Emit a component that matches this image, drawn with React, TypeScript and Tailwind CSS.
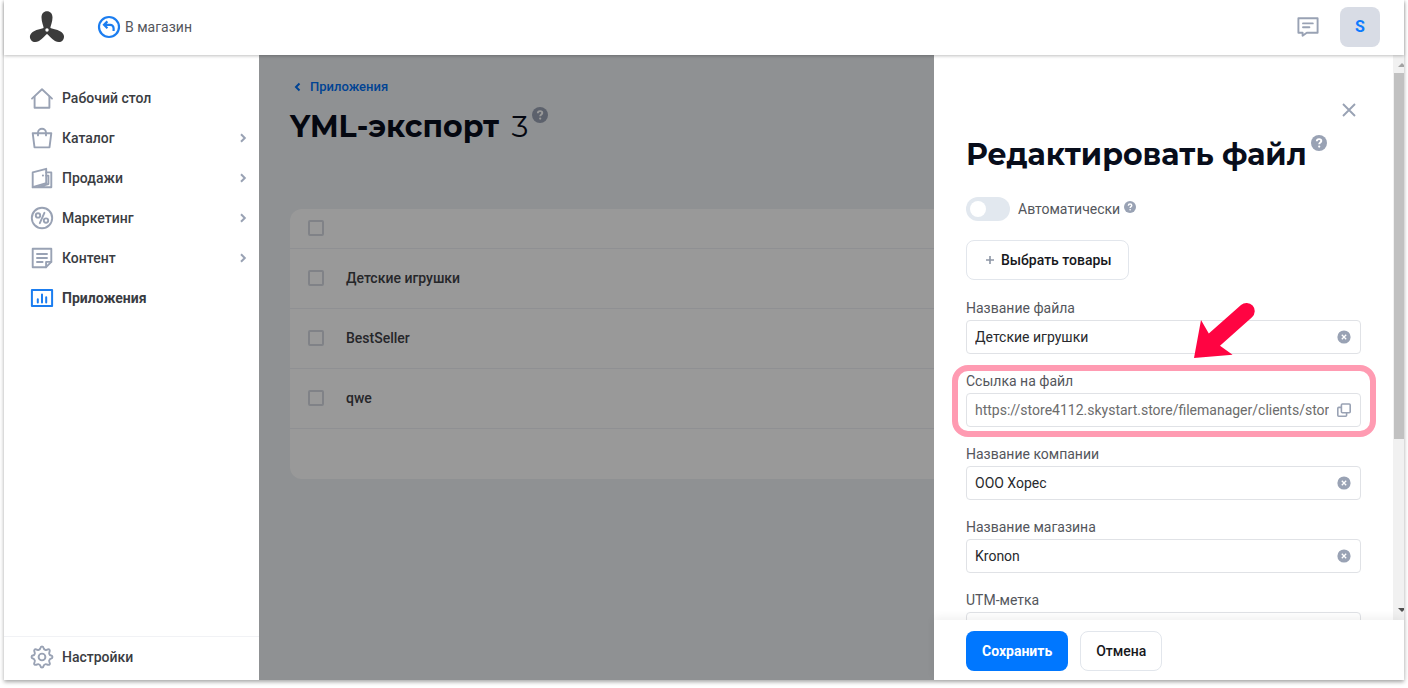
import React from 'react';

interface NavItem {
  label: string;
  icon: React.ReactNode;
  expandable?: boolean;
  active?: boolean;
}

interface FileField {
  id: string;
  label: string;
  value: string;
  copyable?: boolean;
}

const Icon: React.FC<{ children: React.ReactNode; className?: string }> = ({ children, className = '' }) => (
  <svg viewBox="0 0 24 24" className={`w-6 h-6 shrink-0 ${className}`} fill="none" stroke="currentColor" strokeWidth="1.9" strokeLinejoin="round" strokeLinecap="round" aria-hidden="true">
    {children}
  </svg>
);

const HomeIcon = () => (
  <Icon>
    <path d="M2 12.6 12 3.2l10 9.4" />
    <path d="M4.6 10.6v11.2h14.8V10.6" />
  </Icon>
);

const BagIcon = () => (
  <Icon>
    <path d="M2.7 7.2h18.6l-1.8 14.2H4.5z" />
    <path d="M8 9.4V6.8a4 4 0 0 1 8 0v2.6" />
  </Icon>
);

const WalletIcon = () => (
  <Icon>
    <path d="M2.7 6.4 16.2 2.8v14.4L2.7 21.2z" />
    <path d="M16.2 6.4h5.1v14.8H2.7M16.2 9.6h2.2v8.4L8 21" />
    <path d="M12.9 9.6h.1" strokeWidth="2" />
  </Icon>
);

const PercentIcon = () => (
  <Icon>
    <circle cx="12" cy="12" r="10.2" />
    <circle cx="8" cy="9.4" r="2.2" />
    <circle cx="16" cy="14.6" r="2.2" />
    <path d="M14.4 6.8 9.8 17.2" />
  </Icon>
);

const NoteIcon = () => (
  <Icon>
    <path d="M2.7 2.7h18.6v13.2l-5.2 5.3H2.7z" />
    <path d="M21.3 15.9h-5.2v5.3" />
    <path d="M7 8h10M7 12h10M7 16h5.6" />
  </Icon>
);

const ChartIcon = () => (
  <Icon className="text-[#1b7df0]">
    <path d="M1.9 4h20.2v16H1.9z" strokeWidth="2" />
    <path d="M7.8 13.2v3.2M12 8.6v7.8M16.2 11.2v5.2" strokeWidth="2" />
  </Icon>
);

const GearIcon = () => (
  <Icon>
    <path d="M10.2 3.6Q10.6 1.5 12 1.5t1.8 2.1q.3.7 1 1l.4.2q.7.3 1.4 0 2.1-1 2.9-.2t-.2 2.9q-.3.7 0 1.4l.2.4q.3.7 1 1 2 .4 2 1.7t-2 1.8q-.7.3-1 1l-.2.4q-.3.7 0 1.4 1 2.1.2 2.9t-2.9-.2q-.7-.3-1.4 0l-.4.2q-.7.3-1 1-.4 2-1.8 2t-1.8-2q-.3-.7-1-1l-.4-.2q-.7-.3-1.4 0-2.1 1-2.9.2t.2-2.9q.3-.7 0-1.4l-.2-.4q-.3-.7-1-1-2-.4-2-1.8t2-1.7q.7-.3 1-1l.2-.4q.3-.7 0-1.4-1-2.1-.2-2.9t2.9.2q.7.3 1.4 0l.4-.2q.7-.3 1-1z" />
    <circle cx="12" cy="12" r="3.4" />
  </Icon>
);

const HelpIcon: React.FC<{ className?: string }> = ({ className = '' }) => (
  <svg viewBox="0 0 16 16" className={`shrink-0 ${className}`} aria-hidden="true">
    <circle cx="8" cy="8" r="8" fill="#99a2b4" />
    <path d="M5.8 6.3c0-1.4 1-2.2 2.3-2.2s2.2.8 2.2 1.9c0 1.5-2.1 1.6-2.1 3.2" fill="none" stroke="#fff" strokeWidth="1.9" />
    <circle cx="8.2" cy="11.6" r="1.1" fill="#fff" />
  </svg>
);

const ClearIcon = () => (
  <svg viewBox="0 0 14 14" className="w-[14px] h-[14px]" aria-hidden="true">
    <circle cx="7" cy="7" r="6.6" fill="#99a2b4" />
    <path d="m4.8 4.8 4.4 4.4m0-4.4L4.8 9.2" stroke="#fff" strokeWidth="1.3" />
  </svg>
);

const CopyIcon = () => (
  <svg viewBox="0 0 14 14" className="w-[14px] h-[14px]" fill="none" stroke="#99a2b4" strokeWidth="1.6" strokeLinejoin="round" aria-hidden="true">
    <rect x="4.4" y="1" width="8.8" height="8.8" rx="1" />
    <path d="M4.4 4.4H1.8a1 1 0 0 0-1 1v6.8a1 1 0 0 0 1 1h6.8a1 1 0 0 0 1-1V9.9" />
  </svg>
);

const Logo = () => (
  <svg viewBox="0 0 36 36" className="w-9 h-9" aria-hidden="true">
    {[0, 120, 240].map(angle => (
      <path key={angle} transform={`rotate(${angle} 18 21)`} fill="#3b3b3b" d="M18 23c-2.2 0-3-1.4-3.2-3-.3-3.4-2.3-6.8-2.3-11.4 0-4 2.2-6.4 5.5-6.4s5.5 2.4 5.5 6.4c0 4.6-2 8-2.3 11.4-.2 1.6-1 3-3.2 3z" />
    ))}
    <circle cx="18" cy="21" r="1.7" fill="#fff" />
  </svg>
);

const navItems: NavItem[] = [
  { label: 'Рабочий стол', icon: <HomeIcon /> },
  { label: 'Каталог', icon: <BagIcon />, expandable: true },
  { label: 'Продажи', icon: <WalletIcon />, expandable: true },
  { label: 'Маркетинг', icon: <PercentIcon />, expandable: true },
  { label: 'Контент', icon: <NoteIcon />, expandable: true },
  { label: 'Приложения', icon: <ChartIcon />, active: true },
];

const files = ['Детские игрушки', 'BestSeller', 'qwe'];

const fields: FileField[] = [
  { id: 'file-name', label: 'Название файла', value: 'Детские игрушки' },
  { id: 'file-link', label: 'Ссылка на файл', value: 'https://store4112.skystart.store/filemanager/clients/store4112/export.yml', copyable: true },
  { id: 'company', label: 'Название компании', value: 'ООО Хорес' },
  { id: 'shop', label: 'Название магазина', value: 'Kronon' },
  { id: 'utm', label: 'UTM-метка', value: '' },
];

const checkboxClass = 'block appearance-none w-4 h-4 border-2 border-[#d5d9e2] rounded-xs bg-white';
const titleClass = 'font-[Montserrat,Inter,sans-serif] text-[30px] leading-[44px] font-bold text-[#080d1b] whitespace-nowrap';

const Header = () => (
  <header className="relative z-10 h-[55px] shrink-0 flex items-center bg-white pl-[25px] pr-6 pb-[2px] shadow-[0_1px_3px_rgba(0,0,0,0.25)]">
    <a href="#" aria-label="Главная"><Logo /></a>
    <a href="#" className="ml-8 flex items-center gap-1 text-sm text-[#54565c]">
      <svg viewBox="0 0 24 24" className="w-6 h-6" fill="none" stroke="#1b7df0" strokeWidth="2.2" aria-hidden="true">
        <circle cx="12" cy="12" r="10" />
        <path d="M10.4 6.4 7 9.8l3.4 3.4M7.4 9.8h5.8a3.4 3.4 0 0 1 3.4 3.4V16" />
      </svg>
      В магазин
    </a>
    <button className="ml-auto text-[#99a2b4]" aria-label="Сообщения">
      <Icon>
        <path d="M2.4 3.2h19.2v14.6H10.8l-4.2 3v-3H2.4z" />
        <path d="M7 8.4h9.8M7 12.2h6.4" />
      </Icon>
    </button>
    <button className="ml-5 w-10 h-10 rounded-lg bg-[#d8dce5] text-[#0d7aff] font-bold text-base">S</button>
  </header>
);

const Sidebar = () => (
  <nav className="w-[255px] shrink-0 flex flex-col bg-white text-sm font-medium text-[#3a3c42]">
    <ul className="pt-[23px]">
      {navItems.map(item => (
        <li key={item.label}>
          <a href="#" className={`h-10 flex items-center pl-[26px] pr-3 ${item.active ? 'font-bold' : ''}`}>
            <span className="text-[#99a2b4]">{item.icon}</span>
            <span className="ml-2">{item.label}</span>
            {item.expandable && (
              <svg viewBox="0 0 8 10" className="ml-auto w-2 h-[10px]" fill="none" stroke="#99a2b4" strokeWidth="2" aria-hidden="true">
                <path d="M2 1.2 5.8 5 2 8.8" />
              </svg>
            )}
          </a>
        </li>
      ))}
    </ul>
    <a href="#" className="mt-auto h-11 flex items-center pl-[26px] pb-1 border-t border-[#f1f2f5]">
      <span className="text-[#99a2b4]"><GearIcon /></span>
      <span className="ml-2">Настройки</span>
    </a>
  </nav>
);

const ExportList = () => (
  <main className="relative flex-1 min-w-0 overflow-hidden bg-[#eff2f5] pl-[31px]">
    <a href="#" className="mt-[22px] ml-1 flex items-center gap-2 text-[13px] leading-5 font-medium text-[#0070f5]">
      <svg viewBox="0 0 8 10" className="w-2 h-[10px]" fill="none" stroke="currentColor" strokeWidth="2" aria-hidden="true">
        <path d="M5.5 1.5 2 5l3.5 3.5" />
      </svg>
      Приложения
    </a>
    <div className="mt-2 flex items-start gap-1">
      <h1 className={titleClass}>
        YML-экспорт <span className="ml-1 font-normal">3</span>
      </h1>
      <HelpIcon className="mt-[2px] w-4 h-4" />
    </div>
    <div className="mt-[60px] -mr-8 bg-white rounded-xl">
      <table className="w-full text-sm font-medium text-[#3f4147] text-left">
        <thead>
          <tr className="h-[39px] border-b border-[#eff1f5]">
            <th className="w-[56px] pl-[18px]">
              <input type="checkbox" className={checkboxClass} aria-label="Выбрать все" />
            </th>
            <th></th>
          </tr>
        </thead>
        <tbody>
          {files.map(name => (
            <tr key={name} className="h-[60px] border-b border-[#eff1f5]">
              <td className="pl-[18px]">
                <input type="checkbox" className={checkboxClass} aria-label={name} />
              </td>
              <td>{name}</td>
            </tr>
          ))}
        </tbody>
      </table>
      <div className="h-[50px]" />
    </div>
    <div className="absolute inset-0 bg-black/40" />
  </main>
);

// Pink frame with an arrow around the link field
const Highlight = () => (
  <>
    <div className="pointer-events-none absolute -left-[14px] -right-[15px] -top-[6px] -bottom-[10px] rounded-2xl border-6 border-[#ff9bb2]" />
    <svg viewBox="0 0 62 56" className="pointer-events-none absolute right-[105px] -top-[69px] w-[62px] h-14" fill="#ff0442" aria-hidden="true">
      <path d="M0 56 7 18l7.8 13.4L47 3a8.2 8.2 0 0 1 11 12.2L26 43.8l12.6 9z" />
    </svg>
  </>
);

const EditPanel = () => (
  <aside className="w-[470px] shrink-0 flex flex-col bg-white text-[#54565c]">
    <div className="flex-1 min-h-0 flex">
      <form className="flex-1 min-w-0 overflow-hidden px-8 pt-[45px]">
        <div className="flex justify-end pr-1">
          <button type="button" className="w-4 h-5 flex items-center justify-center" aria-label="Закрыть">
            <svg viewBox="0 0 14 14" className="w-[14px] h-[14px]" stroke="#99a2b4" strokeWidth="1.9" aria-hidden="true">
              <path d="m1 1 12 12M13 1 1 13" />
            </svg>
          </button>
        </div>
        <div className="mt-[13px] flex items-start gap-1">
          <h2 className={titleClass}>Редактировать файл</h2>
          <HelpIcon className="mt-[2px] w-4 h-4" />
        </div>
        <div className="mt-5 h-6 flex items-center">
          <input
            id="auto"
            type="checkbox"
            role="switch"
            className="appearance-none w-11 h-6 rounded-full bg-[#e2e8ef] flex items-center pl-1 before:block before:w-4 before:h-4 before:rounded-full before:bg-white"
          />
          <label htmlFor="auto" className="ml-2 text-sm">Автоматически</label>
          <HelpIcon className="ml-1 mb-1 w-3 h-3" />
        </div>
        <button type="button" className="mt-[19px] h-10 flex items-center px-4 border border-[#e2e6ec] rounded-lg text-sm font-medium text-[#17181c]">
          <svg viewBox="0 0 14 14" className="mr-1 w-[14px] h-[14px]" stroke="#8e97a6" strokeWidth="1.6" aria-hidden="true">
            <path d="M7 3v8M3 7h8" />
          </svg>
          Выбрать товары
        </button>
        <div className="mt-[18px] flex flex-col gap-[17px]">
          {fields.map(field => (
            <div key={field.id} className="relative">
              <label htmlFor={field.id} className="block text-sm leading-5">{field.label}</label>
              <div className="mt-[2px] h-[34px] flex items-center gap-2 border border-[#e0e2e6] rounded-sm pl-2 pr-[9px]">
                <input
                  id={field.id}
                  type="text"
                  defaultValue={field.value}
                  readOnly={field.copyable}
                  className={`flex-1 min-w-0 text-sm focus:outline-none ${field.copyable ? 'text-[#6c6c6c]' : 'text-[#28292d]'}`}
                />
                <button type="button" aria-label={field.copyable ? 'Копировать' : 'Очистить'}>
                  {field.copyable ? <CopyIcon /> : <ClearIcon />}
                </button>
              </div>
              {field.copyable && <Highlight />}
            </div>
          ))}
        </div>
      </form>
      <div className="w-[11px] shrink-0 overflow-hidden flex flex-col bg-[#f1f1f1]" aria-hidden="true">
        <svg viewBox="0 0 11 18" className="w-[11px] h-[18px] shrink-0"><path d="m5 12 4-4 4 4z" fill="#a3a3a3" /></svg>
        <div className="ml-px grow-[366] bg-[#c1c1c1]" />
        <div className="grow-[163]" />
        <svg viewBox="0 0 11 18" className="w-[11px] h-[18px] shrink-0"><path d="m5 6 4 4 4-4z" fill="#505050" /></svg>
      </div>
    </div>
    <div className="relative h-[60px] shrink-0 flex items-center gap-3 px-8 pt-[2px] bg-white shadow-[0_-3px_8px_rgba(0,0,0,0.06)] text-sm">
      <button className="h-10 px-4 rounded-lg bg-[#0077ff] text-white font-bold">Сохранить</button>
      <button className="h-10 px-[15px] rounded-lg border border-[#e2e6ec] font-medium text-[#17181c]">Отмена</button>
    </div>
  </aside>
);

const App: React.FC = () => (
  <div className="h-screen bg-white px-1 pb-2 font-[Roboto,sans-serif]">
    <div className="h-full flex flex-col bg-white shadow-[0_2px_4px_rgba(0,0,0,0.35)]">
      <Header />
      <div className="flex-1 min-h-0 flex">
        <Sidebar />
        <ExportList />
        <EditPanel />
      </div>
    </div>
  </div>
);

export default App;
